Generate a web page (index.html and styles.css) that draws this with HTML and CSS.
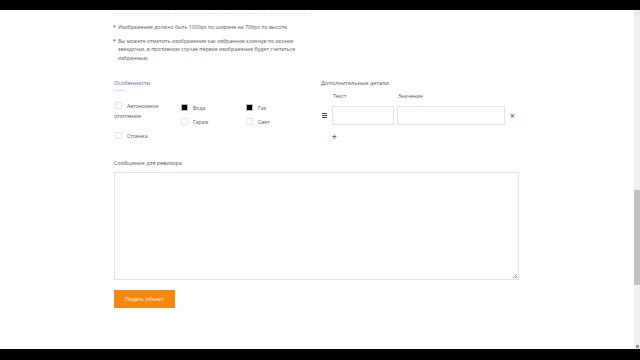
FILE: index.html
```html
<!DOCTYPE html>
<html lang="ru">
<head>
<meta charset="utf-8">
<link rel="stylesheet" href="styles.css">
</head>
<body>
<div class="screen">
  <div class="bar"></div>
  <div class="viewport">
    <main class="page">
      <div class="rule"></div>
      <div class="notes">
        <p class="note"><span class="ast">*</span><span>Изображение должно быть 1000px по ширине на 706px по высоте.</span></p>
        <p class="note"><span class="ast">*</span><span>Вы можете отметить изображение как избранное кликнув по иконке звездочки, в противном случае первое изображение будет считаться избранным.</span></p>
      </div>
      <div class="cols">
        <section class="features">
          <h3 class="h-blue">Особенности</h3>
          <div class="uline"></div>
          <div class="checks">
            <label class="chk tall"><span class="box"></span>Автономное отопление</label>
            <label class="chk"><span class="box on"></span>Вода</label>
            <label class="chk"><span class="box on"></span>Газ</label>
            <label class="chk"><span class="box"></span>Гараж</label>
            <label class="chk"><span class="box"></span>Свет</label>
            <label class="chk"><span class="box"></span>Стоянка</label>
          </div>
        </section>
        <section class="details">
          <h3 class="h-gray">Дополнительные детали</h3>
          <div class="drow heads">
            <span></span><span class="lbl">Текст</span><span class="lbl">Значение</span><span></span>
          </div>
          <div class="drow">
            <span class="handle"><i></i><i></i><i></i></span>
            <span class="inp"></span>
            <span class="inp"></span>
            <span class="x">×</span>
          </div>
          <div class="plus">+</div>
        </section>
      </div>
      <div class="msg-label">Сообщение для ревизора</div>
      <div class="textarea"><span class="grip"></span></div>
      <button class="submit">Подать объект</button>
    </main>
    <div class="scrollbar"><div class="arrow"></div><div class="thumb"></div><div class="arrow down"></div></div>
  </div>
  <div class="bar bottom"></div>
</div>
</body>
</html>
```
FILE: styles.css
```css
* { box-sizing: border-box; }
html, body { margin: 0; padding: 0; background: #000; }
.screen { width: 640px; height: 360px; display: flex; flex-direction: column; overflow: hidden; font-family: "Open Sans", "Liberation Sans", sans-serif; color: #666; }
.bar { height: 10px; background: #000; flex: none; }
.bar.bottom { height: 11px; }
.viewport { flex: 1; display: flex; background: #fff; }
.page { flex: 1; padding: 3px 0 0 114px; }
.rule { width: 199px; border-top: 1px dashed #eeeeee; margin-left: -1px; }
.notes { margin-top: 9px; width: 192px; margin-left: -1px; }
.note { display: flex; margin: 0 0 5px; font-size: 5.2px; line-height: 8.5px; color: #555; }
.note .ast { width: 5px; flex: none; color: #333; }
.cols { display: grid; grid-template-columns: 198px 198px; column-gap: 10px; margin-top: 17px; }
h3 { margin: 0; font-weight: 400; font-size: 5.6px; line-height: 8px; }
.h-blue { color: #4a6a9c; }
.h-gray { color: #555; margin-left: -1px; }
.uline { width: 11px; height: 1px; background: #dcdcdc; margin-top: 3px; }
.checks { display: grid; grid-template-columns: 66px 65px 65px; grid-auto-rows: 14px; margin-top: 12px; }
.chk { font-size: 5.2px; line-height: 10px; color: #555; display: block; }
.chk.tall { grid-row: span 2; padding-right: 6px; margin-top: -2px; }
.box { display: inline-block; width: 7px; height: 7px; border: 1px solid #e6e6e6; background: #fff; vertical-align: -1px; margin: 0 5px 0 1px; }
.box.on { background: #000; border-color: #bbb; }
.drow { display: grid; grid-template-columns: 7px 62px 108px 14px; column-gap: 3px; align-items: center; }
.drow .inp { height: 19px; border: 1px solid #e3e3e3; }
.heads { margin-top: 5px; height: 8px; }
.heads .lbl { font-size: 5.2px; line-height: 8px; color: #555; padding-left: 1px; }
.drow:not(.heads) { margin-top: 6px; }
.handle { display: flex; flex-direction: column; gap: 1px; width: 5px; }
.handle i { display: block; height: 1px; background: #444; }
.x { color: #3f72b8; font-size: 8px; line-height: 8px; padding-left: 2px; font-weight: 700; }
.plus { color: #3f72b8; font-size: 8px; line-height: 8px; font-weight: 700; margin: 8px 0 0 10px; }
.msg-label { font-size: 5.4px; line-height: 8px; color: #555; margin-top: 14px; }
.textarea { position: relative; width: 405px; height: 108px; border: 1px solid #e3e3e3; margin-top: 5px; }
.grip { position: absolute; right: 1px; bottom: 1px; width: 4px; height: 4px; background: linear-gradient(135deg, transparent 50%, #aaa 50%, #aaa 62%, transparent 62%, transparent 75%, #aaa 75%); }
.submit { display: block; margin-top: 10px; width: 61px; height: 18px; border: 0; background: #f7870f; color: #fff; font-family: inherit; font-size: 5.4px; padding: 0; }
.scrollbar { width: 6px; background: #f1f1f1; display: flex; flex-direction: column; }
.arrow { height: 5px; background: #eaeaea; }
.thumb { height: 95px; background: #c1c1c1; margin-top: 175px; }
.arrow.down { margin-top: auto; height: 3px; background: #9a9a9a; width: 3px; margin-left: 2px; margin-bottom: 1px; }
```
